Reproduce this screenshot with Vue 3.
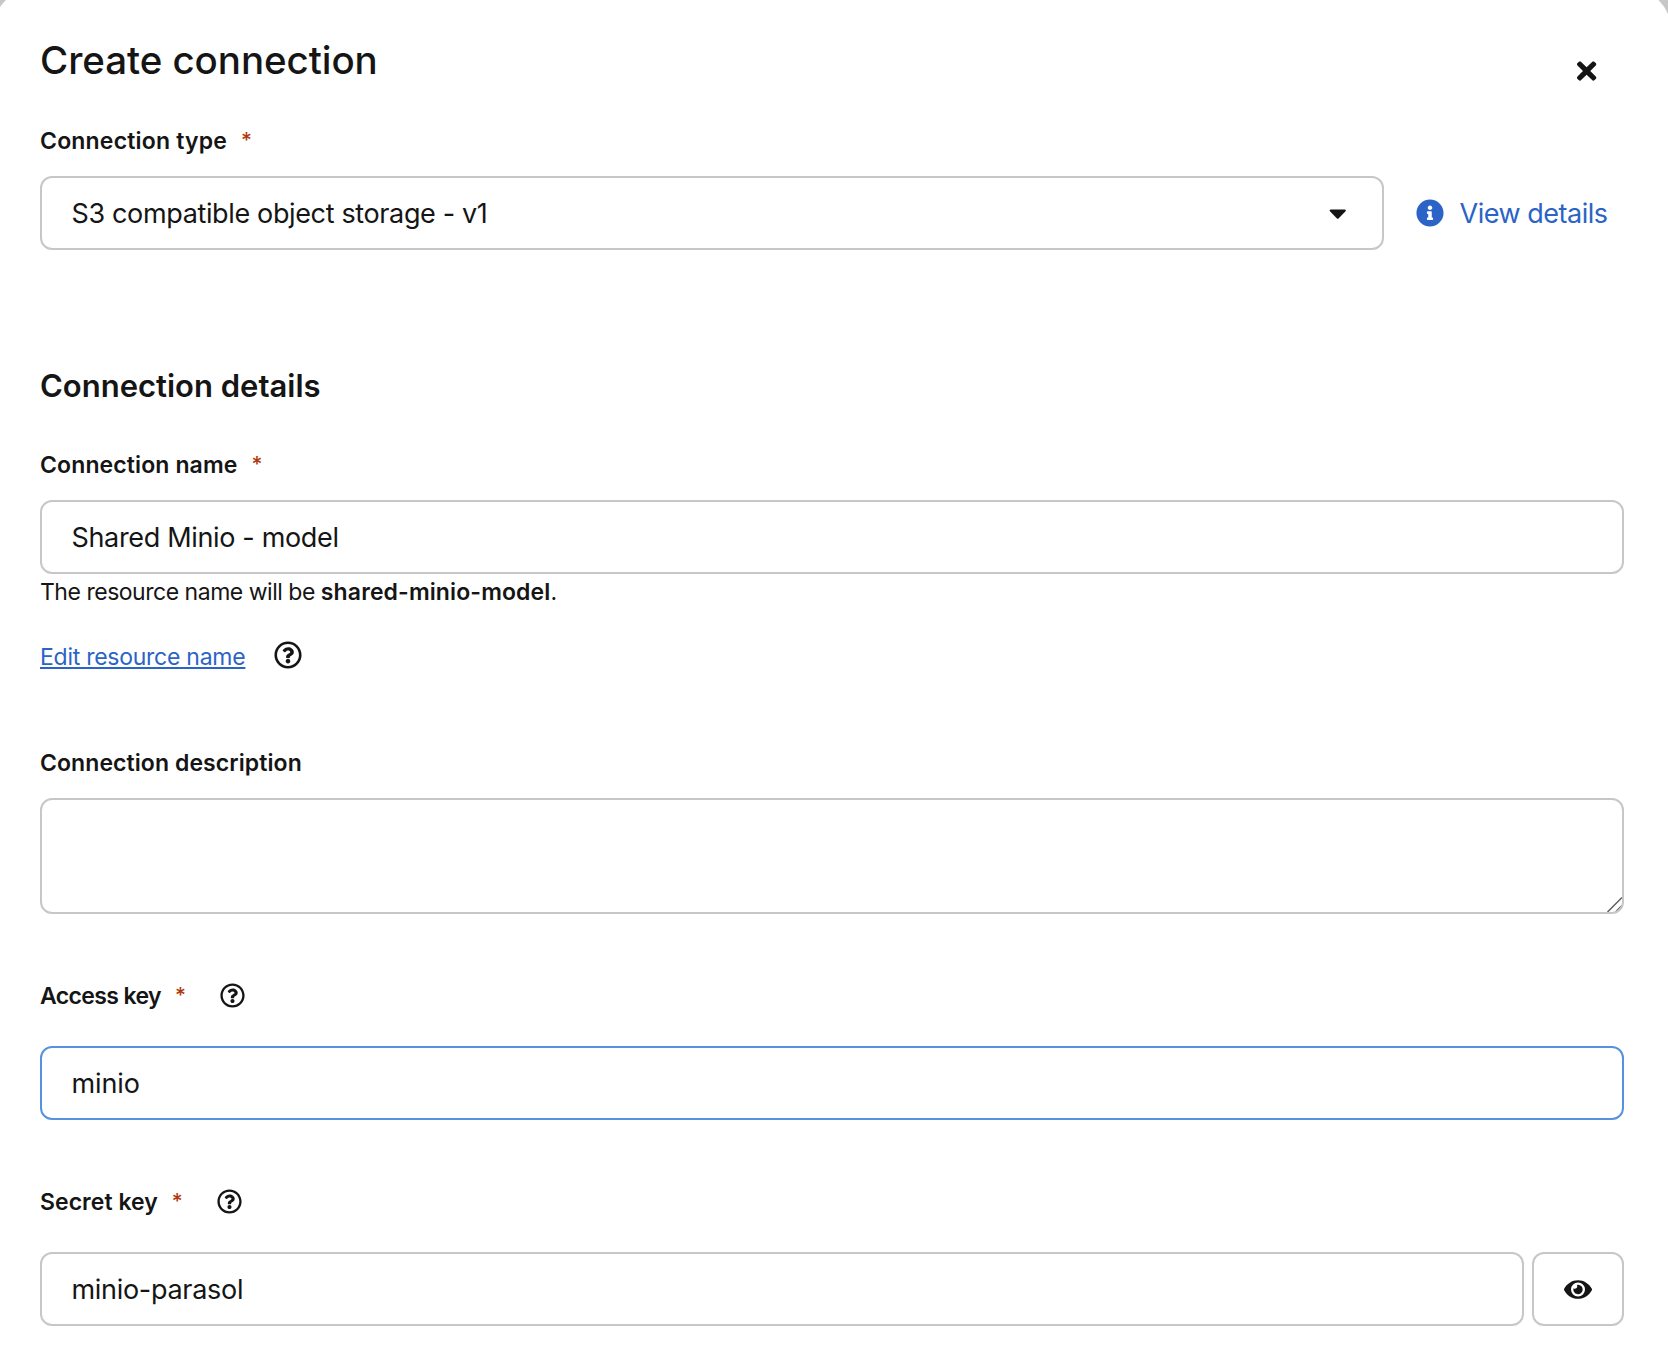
<script setup>
import { ref } from 'vue'

const connectionType = 'S3 compatible object storage - v1'
const name = ref('Shared Minio - model')
const resourceName = 'shared-minio-model'
const accessKey = ref('minio')
const secretKey = ref('minio-parasol')

const icons = {
  help: 'M256 8C119.043 8 8 119.083 8 256c0 136.997 111.043 248 248 248s248-111.003 248-248C504 119.083 392.957 8 256 8zm0 448c-110.532 0-200-89.431-200-200 0-110.495 89.472-200 200-200 110.491 0 200 89.471 200 200 0 110.53-89.431 200-200 200zm107.244-255.2c0 67.052-72.421 68.084-72.421 92.863V300c0 6.627-5.373 12-12 12h-45.647c-6.627 0-12-5.373-12-12v-8.659c0-35.745 27.1-50.034 47.579-61.516 17.561-9.845 28.324-16.541 28.324-29.579 0-17.246-21.999-28.693-39.784-28.693-23.189 0-33.894 10.977-48.942 29.969-4.057 5.12-11.46 6.071-16.666 2.124l-27.824-21.098c-5.107-3.872-6.251-11.066-2.644-16.363C184.846 131.491 214.94 112 261.794 112c49.071 0 101.45 38.304 101.45 88.8zM298 368c0 23.159-18.841 42-42 42s-42-18.841-42-42 18.841-42 42-42 42 18.841 42 42z',
  info: 'M256 8C119.043 8 8 119.083 8 256c0 136.997 111.043 248 248 248s248-111.003 248-248C504 119.083 392.957 8 256 8zm0 110c23.196 0 42 18.804 42 42s-18.804 42-42 42-42-18.804-42-42 18.804-42 42-42zm56 254c0 6.627-5.373 12-12 12h-88c-6.627 0-12-5.373-12-12v-24c0-6.627 5.373-12 12-12h12v-64h-12c-6.627 0-12-5.373-12-12v-24c0-6.627 5.373-12 12-12h64c6.627 0 12 5.373 12 12v100h12c6.627 0 12 5.373 12 12v24z',
  close: 'M242.72 256l100.07-100.07c12.28-12.28 12.28-32.19 0-44.48l-22.24-22.24c-12.28-12.28-32.19-12.28-44.48 0L176 189.28 75.93 89.21c-12.28-12.28-32.19-12.28-44.48 0L9.21 111.45c-12.28 12.28-12.28 32.19 0 44.48L109.28 256 9.21 356.07c-12.28 12.28-12.28 32.19 0 44.48l22.24 22.24c12.28 12.28 32.2 12.28 44.48 0L176 322.72l100.07 100.07c12.28 12.28 32.2 12.28 44.48 0l22.24-22.24c12.28-12.28 12.28-32.19 0-44.48L242.72 256z',
  eye: 'M572.52 241.4C518.29 135.59 410.93 64 288 64S57.68 135.64 3.48 241.41a32.35 32.35 0 0 0 0 29.19C57.71 376.41 165.07 448 288 448s230.32-71.64 284.52-177.41a32.35 32.35 0 0 0 0-29.19zM288 400a144 144 0 1 1 144-144 143.93 143.93 0 0 1-144 144zm0-240a95.31 95.31 0 0 0-25.31 3.79 47.85 47.85 0 0 1-66.9 66.9A95.78 95.78 0 1 0 288 160z',
  caret: 'M31.3 192h257.3c17.8 0 26.7 21.5 14.1 34.1L174.1 354.7c-7.8 7.8-20.5 7.8-28.3 0L17.2 226.1C4.6 213.5 13.5 192 31.3 192z'
}
</script>

<template>
  <main class="modal">
    <svg class="corner left" width="8" height="9" viewBox="0 0 8 9"><path d="M0 0H6Q2.8 3 0 7Z" fill="#c7c7c7" /></svg>
    <svg class="corner right" width="10" height="15" viewBox="0 0 10 15"><path d="M.5 0H10V14Q6.500 6 .5 0Z" fill="#c7c7c7" /></svg>

    <header class="header">
      <h1 class="title">Create connection</h1>
      <button class="close" aria-label="Close">
        <svg width="19.25" height="28" viewBox="0 0 352 512"><path :d="icons.close" /></svg>
      </button>
    </header>

    <div class="label-row first">
      <span class="label t-type">Connection type</span><span class="required">*</span>
    </div>
    <div class="control-row type-row">
      <div class="control select">
        <span class="t-select">{{ connectionType }}</span>
        <svg width="17.5" height="28" viewBox="0 0 320 512"><path :d="icons.caret" /></svg>
      </div>
      <button class="view-details">
        <svg width="28" height="28" viewBox="0 0 512 512"><path :d="icons.info" /></svg>
        <span>View details</span>
      </button>
    </div>

    <h2 class="section-title">Connection details</h2>

    <div class="label-row name-label">
      <span class="label t-name">Connection name</span><span class="required">*</span>
    </div>
    <div class="control-row"><div class="control t-shared">{{ name }}</div></div>
    <p class="helper">The resource name will be <b>{{ resourceName }}</b>.</p>
    <div class="edit-row">
      <a class="edit-link">Edit resource name</a>
      <svg width="28" height="28" viewBox="0 0 512 512"><path :d="icons.help" /></svg>
    </div>

    <div class="label-row description-label">
      <span class="label t-description">Connection description</span>
    </div>
    <div class="control-row">
      <div class="control textarea">
        <svg class="grip" width="16" height="16" viewBox="0 0 16 16">
          <path d="M1.500 16L16 1.500M9.500 16L16 9.500" fill="none" stroke="#5e5e5e" stroke-width="1.5" />
        </svg>
      </div>
    </div>

    <div class="label-row key-label">
      <span class="label t-access">Access key</span><span class="required">*</span>
      <svg class="help" width="25" height="25" viewBox="0 0 512 512"><path :d="icons.help" /></svg>
    </div>
    <div class="control-row key-row"><div class="control focused t-minio">{{ accessKey }}</div></div>

    <div class="label-row key-label">
      <span class="label t-secret">Secret key</span><span class="required">*</span>
      <svg class="help" width="25" height="25" viewBox="0 0 512 512"><path :d="icons.help" /></svg>
    </div>
    <div class="control-row key-row">
      <div class="control t-parasol">{{ secretKey }}</div>
      <button class="control reveal" aria-label="Show secret key">
        <svg width="28" height="25" viewBox="0 0 576 512"><path :d="icons.eye" /></svg>
      </button>
    </div>
  </main>
</template>

<style>
body { background: #fff; }
</style>

<style scoped>
* { box-sizing: border-box; }
.modal {
  position: relative;
  display: flex;
  flex-direction: column;
  height: 1370px;
  padding: 36px 44px 0 40px;
  overflow: hidden;
  background: #fff;
  color: #151515;
  font-family: Inter, "Liberation Sans", sans-serif;
}
svg { display: block; flex: none; fill: currentColor; }
button { padding: 0; border: 0; background: none; color: inherit; font: inherit; }
h1, h2, p { margin: 0; }
.corner { position: absolute; top: 0; }
.left { left: 0; }
.right { right: 0; }
.header { display: flex; justify-content: space-between; height: 48px; }
.title { font-size: 38.5px; font-weight: 500; line-height: 48px; letter-spacing: -0.06px; white-space: nowrap; }
.close { height: 28px; margin: 21px 27.500px 0 0; }

.label-row { display: flex; align-items: center; height: 32px; }
.first { margin-top: 41px; }
.name-label { margin-top: 43px; }
.description-label { margin-top: 75px; }
.key-label { margin-top: 66px; }
.label { font-size: 23px; font-weight: 600; line-height: 32px; white-space: nowrap; }
.required { width: 10px; margin-left: 14px; color: #b1380b; font-size: 21px; font-weight: 500; line-height: 32px; }
.help { margin: -1px 0 0 35px; }

.control-row { display: flex; gap: 8px; margin-top: 19px; }
.key-row { margin-top: 34px; }
.control {
  display: flex;
  flex: 1;
  align-items: center;
  height: 74px;
  padding: 0 29.500px;
  border: 2px solid #c7c7c7;
  border-radius: 12px;
  font-size: 27px;
  white-space: nowrap;
}
.select { flex: 0 0 1344px; justify-content: space-between; padding-right: 35.500px; }
.focused { border-color: #5892de; }
.textarea { position: relative; height: 116px; overflow: hidden; }
.grip { position: absolute; right: 0; bottom: 0; }
.reveal { flex: 0 0 92px; justify-content: center; padding: 0; border: 2px solid #c7c7c7; }
.view-details { display: flex; align-items: center; gap: 15.500px; margin-left: 24px; color: #2b63c6; font-size: 27px; letter-spacing: -0.48px; white-space: nowrap; }

.section-title { height: 40px; margin-top: 116px; font-size: 31px; font-weight: 600; line-height: 40px; letter-spacing: 0; }
.helper { margin-top: 2px; font-size: 23px; line-height: 32px; letter-spacing: -0.48px; }
.helper b { font-weight: 600; letter-spacing: 0.12px; }
.edit-row { display: flex; align-items: center; gap: 29px; height: 32px; margin-top: 32px; }
.edit-row svg { margin-top: -2px; }
.edit-link { padding-top: 2px; color: #2b63c6; font-size: 23px; line-height: 32px; letter-spacing: -0.26px; text-decoration: underline; text-decoration-thickness: 2px; text-underline-offset: 2px; text-decoration-skip-ink: none; }

.t-type { letter-spacing: 0.19px; }
.t-name { letter-spacing: 0.12px; }
.t-description { letter-spacing: 0.08px; }
.t-access { letter-spacing: -0.62px; }
.t-secret { letter-spacing: 0.04px; }
.t-select { letter-spacing: -0.36px; }
.t-shared { letter-spacing: -0.34px; }
.t-minio { letter-spacing: -0.1px; }
.t-parasol { letter-spacing: -0.3px; }
</style>
